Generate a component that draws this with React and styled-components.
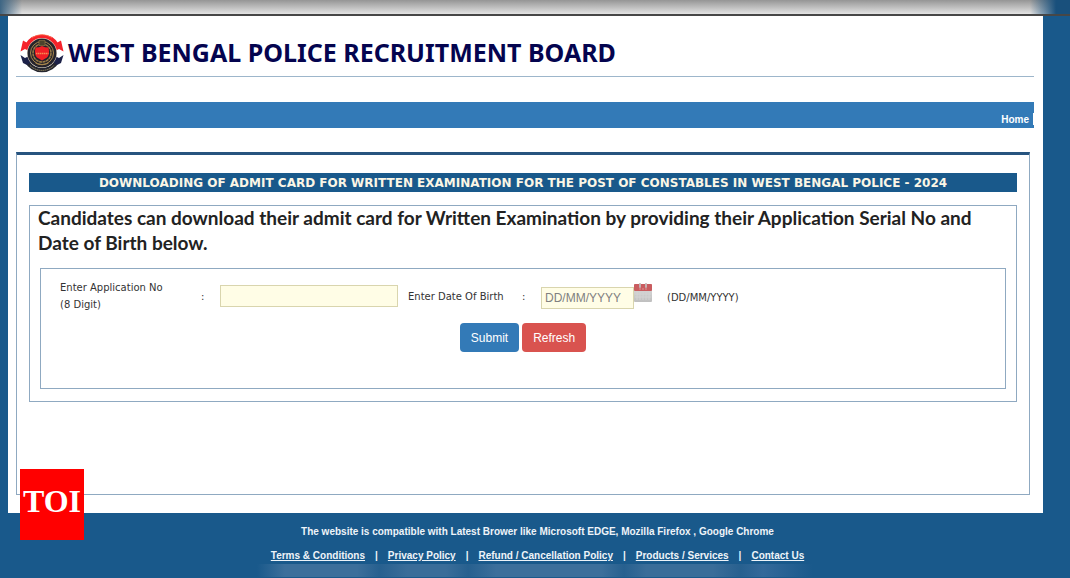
import React from 'react'
import styled, { createGlobalStyle } from 'styled-components';

const links = [
  'Terms & Conditions',
  'Privacy Policy',
  'Refund / Cancellation Policy',
  'Products / Services',
  'Contact Us',
];

function Emblem() {
  return (
    <Logo viewBox="0 0 88 80" role="img" aria-label="Police emblem">
      <path d="M14 26 A34 34 0 0 1 74 26" fill="none" stroke="#f5222a" strokeWidth="10" />
      <path d="M6 15 L22 24 L18 36 L10 32 L1 37 Z M82 15 L66 24 L70 36 L78 32 L87 37 Z" fill="#f5222a" />
      <path d="M13 54 A34 34 0 0 0 75 54" fill="none" stroke="#25262f" strokeWidth="9" />
      <path d="M1 44 L10 50 L18 46 L22 58 L14 64 L6 60 Z M87 44 L78 50 L70 46 L66 58 L74 64 L82 60 Z" fill="#1c2148" />
      <path d="M24 10 A34 34 0 0 1 64 10" fill="none" stroke="#ff7a50" strokeWidth="2" strokeDasharray="3 1" />
      <path d="M20 65 A34 34 0 0 0 68 65" fill="none" stroke="#968a62" strokeWidth="2" strokeDasharray="3 1" />
      <circle cx="44" cy="40" r="30" fill="#f3e6d2" />
      <circle cx="44" cy="40" r="29" fill="#25232b" />
      <circle cx="44" cy="40" r="23" fill="none" stroke="#a8874c" strokeWidth="2" />
      <circle cx="44" cy="40" r="18" fill="none" stroke="#9a7b46" strokeWidth="3" strokeDasharray="6 1" />
      <path d="M38 15 H50 V25 H38 Z" fill="#4b432c" stroke="#a8874c" strokeWidth="1" />
      <path d="M44 26 Q50 29 57 29 Q60 43 54 49 L44 55 L34 49 Q28 43 31 29 Q38 29 44 26 Z" fill="#f01f25" />
      <path d="M32 41 H57" stroke="#f58a52" strokeWidth="3" strokeDasharray="3 1" />
      <path d="M31 60 Q44 67 57 60" fill="none" stroke="#a8874c" strokeWidth="2" />
    </Logo>
  )
}

function CalendarIcon() {
  return (
    <svg width="19" height="20" viewBox="0 0 19 20" aria-hidden="true">
      <defs>
        <linearGradient id="calPage" x1="0" y1="0" x2="0" y2="1">
          <stop offset="0" stopColor="#dedede" />
          <stop offset="1" stopColor="#bfbfbf" />
        </linearGradient>
      </defs>
      <rect x="0" y="1" width="18" height="18" rx="1" fill="url(#calPage)" />
      <path d="M3 9V17M6 9V17M9 9V17M12 9V17M15 9V17M1 11H17M1 14H17" stroke="#d3d3d3" strokeWidth="1" />
      <rect x="0" y="1" width="18" height="7" rx="1" fill="#c95c5f" />
      <path d="M5 6H13" stroke="#dd9293" strokeWidth="1" strokeDasharray="2 1" />
      <path d="M6 1V4M12 1V4" stroke="#c5b3b3" strokeWidth="2" strokeLinecap="round" />
    </svg>
  )
}

function App() {
  return (
    <>
      <GlobalStyle />
      <TopStrip />
      <Sheet>
        <Header>
          <Emblem />
          <Title>WEST BENGAL POLICE RECRUITMENT BOARD</Title>
        </Header>
        <Nav>
          <NavLink href="#home">Home</NavLink>
        </Nav>
        <Panel>
          <Banner>DOWNLOADING OF ADMIT CARD FOR WRITTEN EXAMINATION FOR THE POST OF CONSTABLES IN WEST BENGAL POLICE - 2024</Banner>
          <Box>
            <Intro>
              Candidates can download their admit card for Written Examination by providing their Application Serial No and Date of Birth below.
            </Intro>
            <Form onSubmit={(e) => e.preventDefault()}>
              <Fields>
                <Label htmlFor="appNo">Enter Application No<br />(8 Digit)</Label>
                <Colon>:</Colon>
                <Input id="appNo" type="text" maxLength={8} />
                <Label htmlFor="dob">Enter Date Of Birth</Label>
                <Colon>:</Colon>
                <DateField>
                  <Input id="dob" type="text" placeholder="DD/MM/YYYY" />
                  <CalendarButton type="button" aria-label="Pick a date"><CalendarIcon /></CalendarButton>
                </DateField>
                <Hint>(DD/MM/YYYY)</Hint>
              </Fields>
              <Actions>
                <Button type="submit" $color="#337ab7">Submit</Button>
                <Button type="reset" $color="#d9534f">Refresh</Button>
              </Actions>
            </Form>
          </Box>
        </Panel>
        <Badge>TOI</Badge>
      </Sheet>
      <Footer>
        <p>The website is compatible with Latest Brower like Microsoft EDGE, Mozilla Firefox , Google Chrome</p>
        <FooterLinks>
          {links.map((text, i) => (
            <React.Fragment key={text}>
              {i > 0 && <span>|</span>}
              <a href="#footer">{text}</a>
            </React.Fragment>
          ))}
        </FooterLinks>
      </Footer>
      <BottomGlow />
    </>
  )
}

const GlobalStyle = createGlobalStyle`
    * {
        box-sizing: border-box;
    }
    body {
        margin: 0;
        background: #19598b;
        font-family: "Liberation Sans", Arial, sans-serif;
    }
    h1, h2, p {
        margin: 0;
    }
`;

const TopStrip = styled.div`
    height: 16px;
    border-bottom: 2px solid #474747;
    background:
        linear-gradient(to right, #3d6584, rgba(61, 101, 132, 0) 22px),
        linear-gradient(to left, #19507c 14px, rgba(25, 80, 124, 0) 40px),
        linear-gradient(#959595, #e4e4e4);
`;

const Sheet = styled.main`
    position: relative;
    margin: 0 27px 0 8px;
    padding: 0 9px 18px 8px;
    background: #ffffff;
`;

const Header = styled.header`
    display: flex;
    align-items: center;
    height: 61px;
    padding: 14px 4px 0;
    border-bottom: 1px solid #9db6cb;
`;

const Logo = styled.svg`
    width: 44px;
    height: 40px;
    margin-right: 4px;
`;

const Title = styled.h1`
    padding-bottom: 2px;
    font: bold 25px/36px "Noto Sans", "Segoe UI", sans-serif;
    color: #04044f;
`;

const Nav = styled.nav`
    display: flex;
    justify-content: flex-end;
    align-items: flex-end;
    height: 26px;
    margin-top: 25px;
    padding-bottom: 3px;
    background: #337ab7;
`;

const NavLink = styled.a`
    padding: 1px 4px 0 0;
    border-right: 1px solid #ffffff;
    font-size: 10px;
    line-height: 11px;
    font-weight: bold;
    color: #ffffff;
    text-decoration: none;
`;

const Panel = styled.section`
    min-height: 343px;
    margin: 24px 4px 0 0;
    padding: 18px 12px;
    border: 1px solid #8fa9c1;
    border-top: 3px solid #27547f;
`;

const Banner = styled.h2`
    padding-top: 1px;
    background: #19598b;
    color: #fbf6e6;
    text-align: center;
    font: bold 12px/18px "DejaVu Sans", Verdana, sans-serif;
`;

const Box = styled.div`
    margin-top: 13px;
    padding-bottom: 12px;
    border: 1px solid #8fa9c1;
`;

const Intro = styled.p`
    padding: 0 8px;
    margin-top: -1px;
    font: bold 19px/25px Lato, Calibri, sans-serif;
    color: #222222;
`;

const Form = styled.form`
    min-height: 121px;
    margin: 13px 10px 0;
    padding: 10px 19px;
    border: 1px solid #8fa9c1;
`;

const Fields = styled.div`
    display: flex;
    align-items: center;
    font: 10px/17px "DejaVu Sans", Verdana, sans-serif;
    color: #333333;
`;

const Label = styled.label`
    min-width: 114px;

    &:first-child {
        min-width: 141px;
    }
`;

const Colon = styled.span`
    width: 19px;
`;

const Input = styled.input`
    width: 178px;
    height: 22px;
    margin-right: 10px;
    padding: 1px 3px;
    border: 1px solid #d9d5ae;
    background: #fffde6;
    font: 12px "Liberation Sans", Arial, sans-serif;

    &::placeholder {
        color: #808080;
    }
`;

const DateField = styled.div`
    display: flex;
    align-items: flex-start;
    margin-right: 14px;

    ${Input} {
        width: 93px;
        margin: 4px 0 0;
    }
`;

const CalendarButton = styled.button`
    display: flex;
    padding: 0;
    border: 0;
    background: none;
`;

const Hint = styled.span`
    padding-top: 3px;
`;

const Actions = styled.div`
    display: flex;
    justify-content: center;
    gap: 3px;
    margin-top: 10px;
`;

const Button = styled.button`
    height: 29px;
    padding: 0 11px;
    border: 0;
    border-radius: 4px;
    background: ${(props) => props.$color};
    color: #ffffff;
    font: 12px "Liberation Sans", Arial, sans-serif;
`;

const Badge = styled.div`
    position: absolute;
    left: 12px;
    bottom: -27px;
    width: 64px;
    height: 71px;
    background: #ff0000;
    color: #ffffff;
    text-align: center;
    font: bold 32px/64px "Liberation Serif", "Times New Roman", serif;
`;

const Footer = styled.footer`
    padding: 13px 0 2px 5px;
    text-align: center;
    font-size: 10px;
    line-height: 12px;
    font-weight: bold;
    color: #eef4f9;

    a {
        color: inherit;
    }
`;

const FooterLinks = styled.div`
    display: flex;
    justify-content: center;
    gap: 10px;
    margin-top: 12px;
`;

const BottomGlow = styled.div`
    width: 556px;
    height: 13px;
    margin: 0 auto;
    background: linear-gradient(
        to right,
        rgba(64, 113, 156, 0),
        #3c6f9b 5%,
        #3c6f9b 18%,
        #27608f 22%,
        #3a6d99 27%,
        #3a6d99 34%,
        #27608f 38%,
        #3c6f9b 43%,
        #3c6f9b 62%,
        #27608f 66%,
        #3a6d99 70%,
        #3a6d99 82%,
        #27608f 87%,
        #34699a 91%,
        rgba(64, 113, 156, 0)
    );
`;

export default App;
